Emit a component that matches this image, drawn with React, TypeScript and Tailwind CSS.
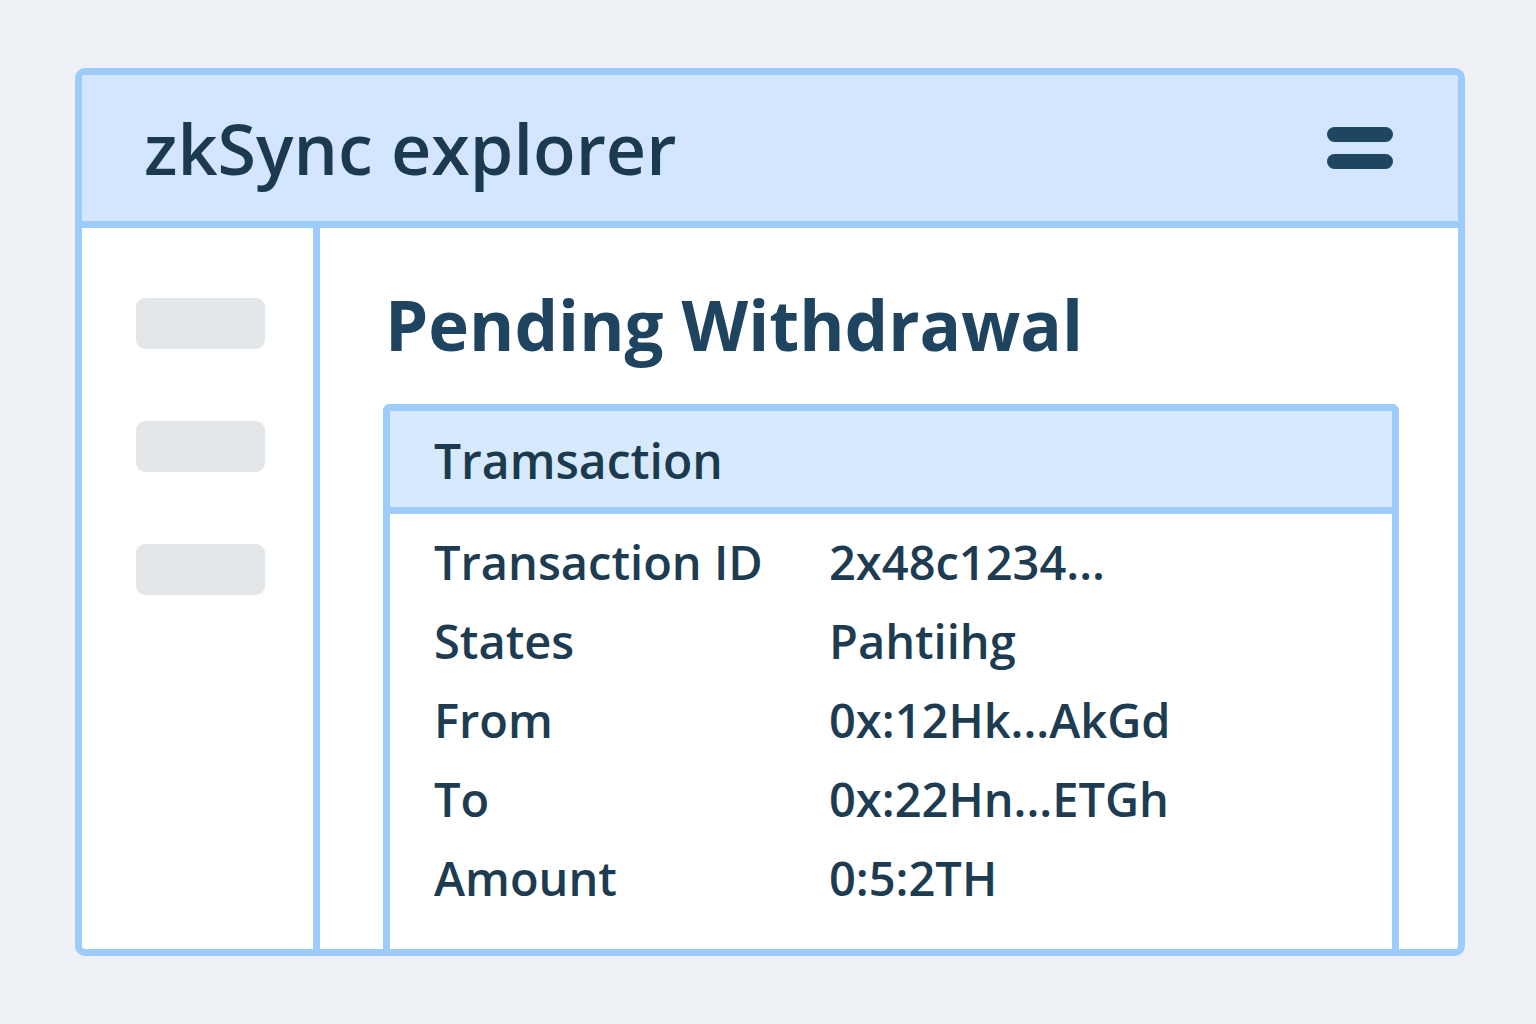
const rows = [
  { label: 'Transaction ID', value: '2x48c1234...' },
  { label: 'States', value: 'Pahtiihg' },
  { label: 'From', value: '0x:12Hk...AkGd' },
  { label: 'To', value: '0x:22Hn...ETGh' },
  { label: 'Amount', value: '0:5:2TH' },
]

export default function App() {
  return (
    <div className="min-h-screen w-full bg-[#eef2f6] pt-[68px] pl-[75px] font-['Open_Sans',sans-serif] text-[#1d3c52]">
      <div className="flex h-[888px] w-[1390px] flex-col overflow-hidden rounded-[10px] border-[7px] border-[#9dcbfa] bg-white">
        {/* Header */}
        <header className="flex h-[153px] shrink-0 items-center justify-between border-b-[7px] border-[#9dcbfa] bg-[#d3e6fd] pl-[62px] pr-[65px]">
          <h1 className="text-[70px] font-semibold leading-none text-[#1c3a4e]">zkSync explorer</h1>
          <div className="flex flex-col gap-[12px]">
            <span className="block h-[15px] w-[66px] rounded-full bg-[#1f4660]" />
            <span className="block h-[15px] w-[66px] rounded-full bg-[#1f4660]" />
          </div>
        </header>

        <div className="flex flex-1">
          {/* Sidebar */}
          <aside className="flex w-[238px] shrink-0 flex-col gap-[72px] border-r-[7px] border-[#9dcbfa] pl-[54px] pt-[70px]">
            <div className="h-[51px] w-[129px] rounded-[9px] bg-[#e3e7ea]" />
            <div className="h-[51px] w-[129px] rounded-[9px] bg-[#e3e7ea]" />
            <div className="h-[51px] w-[129px] rounded-[9px] bg-[#e3e7ea]" />
          </aside>

          {/* Main */}
          <main className="flex flex-1 flex-col pl-[63px] pr-[59px] pt-[62px]">
            <h2 className="mb-[45px] ml-[2px] text-[69px] font-bold leading-none text-[#1f4460]">Pending Withdrawal</h2>

            <section className="flex flex-1 flex-col rounded-t-[7px] border-[7px] border-b-0 border-[#9dcbfa]">
              <div className="flex h-[103px] items-center border-b-[7px] border-[#9dcbfa] bg-[#d6e9fd] pl-[44px] pt-1">
                <h3 className="text-[48px] font-semibold leading-none text-[#1c3a4e]">Tramsaction</h3>
              </div>
              <dl className="flex flex-col pl-[44px] pt-[9px]">
                {rows.map(r => (
                  <div key={r.label} className="flex h-[79px] items-center text-[47px] leading-[79px]">
                    <dt className="w-[395px] shrink-0 font-semibold">{r.label}</dt>
                    <dd className="font-semibold">{r.value}</dd>
                  </div>
                ))}
              </dl>
            </section>
          </main>
        </div>
      </div>
    </div>
  )
}
